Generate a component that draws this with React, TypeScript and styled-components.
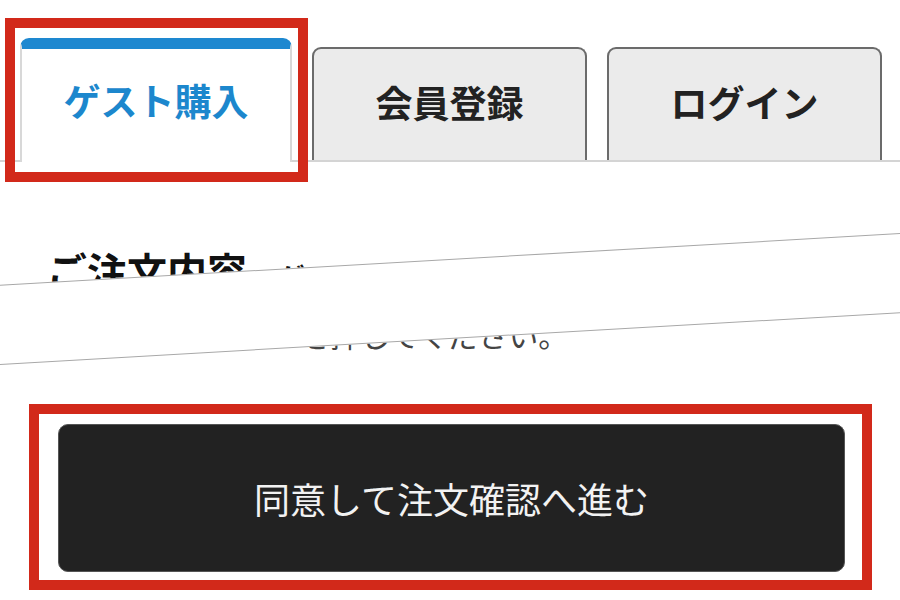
import styled, { createGlobalStyle } from "styled-components";

const GlobalStyle = createGlobalStyle`
  html, body {
    margin: 0;
    padding: 0;
    background: #fff;
  }
  body {
    font-family: "Noto Sans CJK JP", "Noto Sans", sans-serif;
  }
`;

const Page = styled.div`
  position: relative;
  width: 900px;
  height: 600px;
  overflow: hidden;
  background: #fff;
`;

const TabBar = styled.div`
  display: flex;
  align-items: flex-end;
  gap: 20px;
  height: 122px;
  padding: 38px 0 0 20px;
  border-bottom: 2px solid #d4d4d4;
`;

const Tab = styled.div<{ $active?: boolean }>`
  display: flex;
  align-items: center;
  justify-content: center;
  box-sizing: border-box;
  width: ${({ $active }) => ($active ? "272px" : "275px")};
  height: ${({ $active }) => ($active ? "124px" : "113px")};
  margin-bottom: ${({ $active }) => ($active ? "-2px" : "0")};
  padding-bottom: ${({ $active }) => ($active ? "10px" : "4px")};
  border: 2px solid ${({ $active }) => ($active ? "#d8d8d8" : "#6b6b6b")};
  border-top: ${({ $active }) => ($active ? "11px solid #1e88d0" : "2px solid #6b6b6b")};
  border-bottom: none;
  border-radius: 9px 9px 0 0;
  background: ${({ $active }) => ($active ? "#fff" : "#ebebeb")};
  color: ${({ $active }) => ($active ? "#1c87cd" : "#222")};
  font-size: 37px;
  font-weight: 700;
  line-height: 1;
`;

const Content = styled.div`
  padding: 88px 55px 0 47px;
`;

const Heading = styled.h2`
  display: flex;
  align-items: baseline;
  gap: 32px;
  margin: 0;
  font-size: 40px;
  font-weight: 700;
  line-height: 1;
  color: #111;
`;

const HeadingNote = styled.span`
  font-size: 26px;
  font-weight: 700;
`;

const Lead = styled.p`
  margin: 26px 0 0;
  padding-left: 13px;
  font-size: 30px;
  line-height: 1.2;
  color: #444;
`;

const SubmitButton = styled.button`
  display: flex;
  align-items: center;
  justify-content: center;
  box-sizing: border-box;
  width: 787px;
  height: 148px;
  margin: 72px 0 0 11px;
  border: 1px solid #555;
  border-radius: 10px;
  background: #222;
  color: #f2f2f2;
  font-family: inherit;
  font-size: 36px;
  font-weight: 400;
`;

/* strip that hides the middle of the page (omission mark) */
const CutStrip = styled.div`
  position: absolute;
  left: -50px;
  top: 259px;
  width: 1000px;
  height: 80px;
  box-sizing: border-box;
  background: #fff;
  border-top: 1px solid #a8a8a8;
  border-bottom: 1px solid #a8a8a8;
  transform: rotate(-3.29deg);
`;

const Highlight = styled.div<{ $x: number; $y: number; $w: number; $h: number }>`
  position: absolute;
  left: ${({ $x }) => $x}px;
  top: ${({ $y }) => $y}px;
  width: ${({ $w }) => $w}px;
  height: ${({ $h }) => $h}px;
  box-sizing: border-box;
  border: 10px solid #d2291a;
  pointer-events: none;
`;

export default function App() {
  return (
    <Page>
      <GlobalStyle />
      <TabBar>
        <Tab $active>ゲスト購入</Tab>
        <Tab>会員登録</Tab>
        <Tab>ログイン</Tab>
      </TabBar>
      <Content>
        <Heading>
          ご注文内容
          <HeadingNote>ゲスト購入</HeadingNote>
        </Heading>
        <Lead>内容確認後ボタンを押してください。</Lead>
        <SubmitButton>同意して注文確認へ進む</SubmitButton>
      </Content>
      <CutStrip />
      <Highlight $x={5} $y={18} $w={303} $h={164} />
      <Highlight $x={29} $y={404} $w={843} $h={186} />
    </Page>
  );
}
